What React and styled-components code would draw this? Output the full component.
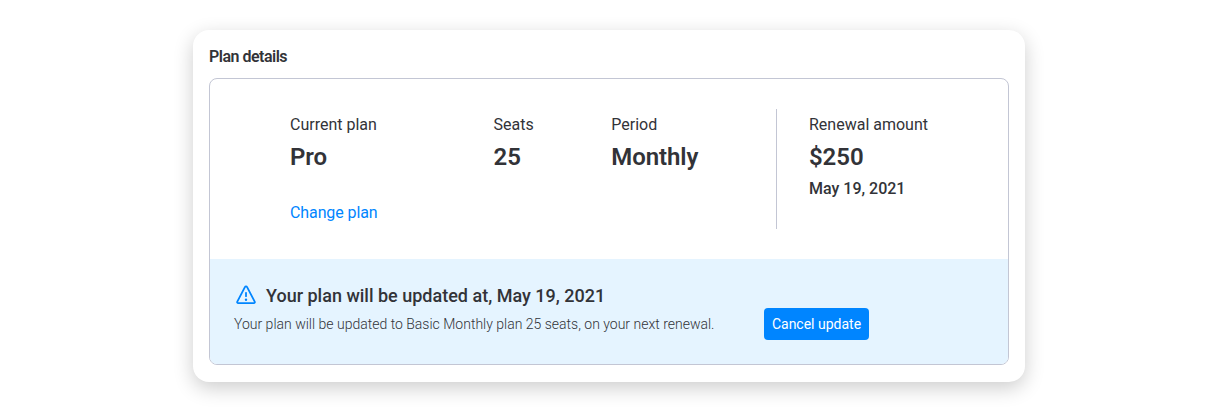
import React from 'react'
import styled, { createGlobalStyle } from 'styled-components'

const details = [
    { label: 'Current plan', value: 'Pro', width: 203.5 },
    { label: 'Seats', value: '25', width: 117.8 },
    { label: 'Period', value: 'Monthly', width: 164.7 },
]

function WarningIcon() {
    return (
        <svg width="20" height="20" viewBox="0 0 20 20" fill="none" stroke="#0085ff" strokeWidth="1.8" strokeLinejoin="round" strokeLinecap="round">
            <path d="M8.9 2.1 1.3 16.6c-.4.8 0 1.5.9 1.5h15.6c.9 0 1.3-.7.9-1.5L11.1 2.1c-.5-.9-1.7-.9-2.2 0Z" />
            <path d="M10 7.8v3.4" />
            <circle cx="10" cy="14.7" r="1.2" fill="#0085ff" stroke="none" />
        </svg>
    )
}

function App() {
    return (
        <>
            <GlobalStyle />
            <Page>
                <Card>
                    <Title>Plan details</Title>
                    <Panel>
                        <Summary>
                            {details.map(item => (
                                <Detail key={item.label} $width={item.width}>
                                    <Label>{item.label}</Label>
                                    <Value>{item.value}</Value>
                                    {item.value === 'Pro' && <ChangeLink href="#">Change plan</ChangeLink>}
                                </Detail>
                            ))}
                            <Renewal>
                                <Label>Renewal amount</Label>
                                <Value>$250</Value>
                                <RenewalDate>May 19, 2021</RenewalDate>
                            </Renewal>
                        </Summary>
                        <Notice>
                            <div>
                                <NoticeTitle>
                                    <WarningIcon />
                                    <span>Your plan will be updated at, May 19, 2021</span>
                                </NoticeTitle>
                                <NoticeText>Your plan will be updated to Basic Monthly plan 25 seats, on your next renewal.</NoticeText>
                            </div>
                            <Button type="button">Cancel update</Button>
                        </Notice>
                    </Panel>
                </Card>
            </Page>
        </>
    )
}

const GlobalStyle = createGlobalStyle`
    * {
        box-sizing: border-box;
    }
    body {
        margin: 0;
        background: white;
        color: #323338;
        font-family: Roboto, sans-serif;
    }
`

const Page = styled.div`
    width: 1218px;
    height: 413px;
    padding: 30px 193px 0;
`

const Card = styled.section`
    width: 832px;
    height: 352px;
    padding: 16px;
    border-radius: 16px;
    background: white;
    box-shadow: 0 6px 20px rgba(0, 0, 0, 0.2);
`

const Title = styled.h2`
    height: 32px;
    margin: 0;
    font-size: 16px;
    line-height: 22px;
    font-weight: 600;
    letter-spacing: -0.5px;
`

const Panel = styled.div`
    height: 287px;
    border: 1px solid #c3c6d4;
    border-radius: 8px;
    overflow: hidden;
`

const Summary = styled.div`
    display: flex;
    height: 180px;
    padding: 30px 24px 30px 80px;
`

const Detail = styled.div`
    width: ${props => props.$width}px;
    flex-shrink: 0;
    padding-top: 4px;
`

const Renewal = styled.div`
    flex: 1;
    padding: 4px 0 0 32px;
    border-left: 1px solid #c3c6d4;
    white-space: nowrap;
`

const Label = styled.div`
    font-size: 16px;
    line-height: 24px;
`

const Value = styled.div`
    font-size: 24px;
    line-height: 32px;
    padding-top: 4px;
    font-weight: 600;
    letter-spacing: -0.08px;
`

const RenewalDate = styled.div`
    font-size: 16px;
    line-height: 24px;
    padding-top: 4px;
    font-weight: 500;
`

const ChangeLink = styled.a`
    display: block;
    margin-top: 28px;
    font-size: 16px;
    line-height: 24px;
    letter-spacing: -0.1px;
    color: #0085ff;
    text-decoration: none;
`

const Notice = styled.div`
    display: flex;
    align-items: flex-start;
    gap: 50px;
    height: 105px;
    padding: 23px 24px 24px;
    background: #e5f4ff;
`

const NoticeTitle = styled.div`
    display: flex;
    align-items: center;
    gap: 10px;
    height: 26px;
    padding-left: 2px;
    font-size: 18px;
    font-weight: 500;
`

const NoticeText = styled.div`
    width: 480px;
    margin-top: 6px;
    font-size: 14px;
    line-height: 20px;
    font-weight: 300;
    white-space: nowrap;
`

const Button = styled.button`
    width: 105px;
    height: 32px;
    margin-top: 26px;
    padding: 0;
    border: 0;
    border-radius: 4px;
    background: #0085ff;
    color: white;
    font-family: inherit;
    font-size: 14px;
`

export default App
